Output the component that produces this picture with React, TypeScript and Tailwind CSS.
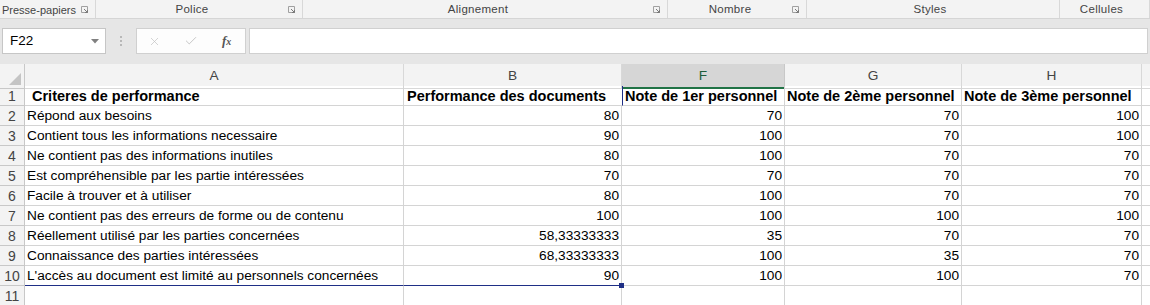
import { Check, X } from "lucide-react";

const rows: [string, string, string, string, string][] = [
  ["Répond aux besoins", "80", "70", "70", "100"],
  ["Contient tous les informations necessaire", "90", "100", "70", "100"],
  ["Ne contient pas des informations inutiles", "80", "100", "70", "70"],
  ["Est compréhensible par les partie intéressées", "70", "70", "70", "70"],
  ["Facile à trouver et à utiliser", "80", "100", "70", "70"],
  ["Ne contient pas des erreurs de forme ou de contenu", "100", "100", "100", "100"],
  ["Réellement utilisé par les parties concernées", "58,33333333", "35", "70", "70"],
  ["Connaissance des parties intéressées", "68,33333333", "100", "35", "70"],
  ["L'accès au document est limité au personnels concernées", "90", "100", "100", "70"],
];

const groups = [
  { label: "Presse-papiers", w: "w-[96px]", launcher: true, left: true },
  { label: "Police", w: "w-[207px]", launcher: true },
  { label: "Alignement", w: "w-[365px]", launcher: true },
  { label: "Nombre", w: "w-[139px]", launcher: true },
  { label: "Styles", w: "w-[253px]", launcher: false },
  { label: "Cellules", w: "flex-1", launcher: false },
];

function Launcher() {
  return (
    <svg width="8" height="8" viewBox="0 0 8 8" className="shrink-0">
      <path d="M0.5 0.5h6v6h-6z" fill="none" stroke="#a0a0a0" />
      <path d="M3 3l3.5 3.5M4 6.5h2.5V4" fill="none" stroke="#7a7a7a" />
    </svg>
  );
}

const grid = "grid grid-cols-[25px_379px_218px_163px_177px_180px_1fr]";

export default function App() {
  return (
    <div className="h-[305px] w-[1150px] overflow-hidden bg-white font-['Liberation_Sans',sans-serif] text-[13.7px] text-black">
      {/* ribbon group labels */}
      <div className="flex h-[19px] border-b border-[#d5d5d5] bg-[#f3f3f3] text-[11.5px] text-[#444]">
        {groups.map((g) => (
          <div key={g.label} className={`${g.w} flex items-center whitespace-nowrap border-r border-[#d8d8d8] pr-[6px] pt-[2px]`}>
            <span className={g.left ? "pl-[2px] text-[11px]" : "flex-1 text-center tracking-[0.3px]"}>{g.label}</span>
            {g.left && <span className="flex-1" />}
            {g.launcher && <Launcher />}
          </div>
        ))}
      </div>

      {/* formula bar */}
      <div className="flex h-[45px] items-center bg-[#e6e6e6] px-[2px] pb-px">
        <div className="flex h-[26px] w-[104px] items-center justify-between border border-[#c6c6c6] bg-white pl-[7px] pr-[6px]">
          <span className="pt-px text-[13.5px]">F22</span>
          <svg width="8" height="5" viewBox="0 0 8 5">
            <path d="M0 0h8L4 4.5z" fill="#808080" />
          </svg>
        </div>
        <div className="flex w-[30px] flex-col items-center gap-[2px]">
          <span className="h-[2px] w-[2px] bg-[#b8b8b8]" />
          <span className="h-[2px] w-[2px] bg-[#b8b8b8]" />
          <span className="h-[2px] w-[2px] bg-[#b8b8b8]" />
        </div>
        <div className="flex h-[26px] w-[110px] items-center border border-[#d0d0d0] bg-[#fdfdfd]">
          <X size={13} strokeWidth={1.3} className="ml-[11px] text-[#c2c2c2]" />
          <Check size={14} strokeWidth={1.6} className="ml-[23px] text-[#c2c2c2]" />
          <span className="ml-[24px] font-['Liberation_Serif',serif] text-[13px] font-bold italic text-[#555]">
            f<span className="text-[10px]">x</span>
          </span>
        </div>
        <div className="ml-[3px] h-[26px] flex-1 border border-[#d0d0d0] bg-white" />
      </div>

      {/* sheet */}
      <div className={`${grid} h-[22px] bg-[#f3f3f3] text-[#444]`}>
        <div className="relative border-r border-b border-[#c8c8c8] bg-[#f3f3f3]">
          <svg width="12" height="12" viewBox="0 0 12 12" className="absolute bottom-[3px] right-[3px]">
            <path d="M12 0V12H0z" fill="#c4c4c4" />
          </svg>
        </div>
        {["A", "B", "F", "G", "H"].map((c) =>
          c === "F" ? (
            <div key={c} className="flex items-center justify-center border-r border-b-2 border-r-[#c8c8c8] border-b-[#217346] bg-[#d6d6d6] pt-[2px] text-[#1d5c3a]">
              {c}
            </div>
          ) : (
            <div key={c} className="flex items-center justify-center border-r border-b border-[#d8d8d8] pt-px">
              {c}
            </div>
          ),
        )}
        <div className="border-b border-[#d8d8d8]" />
      </div>

      <div className={`${grid} auto-rows-[20px]`}>
        <div className="flex items-center justify-center border-r border-b border-[#c8c8c8] bg-[#f3f3f3] pt-[2px] text-[14px] text-[#444]">1</div>
        <div className="flex items-center whitespace-nowrap border-r border-b border-[#d4d4d4] pl-[7px] pt-[2px] text-[14.5px] font-bold">
          Criteres de performance
        </div>
        <div className="flex items-center whitespace-nowrap border-b border-[#d4d4d4] pl-[3px] pt-[2px] text-[14.5px] font-bold">
          Performance des documents
        </div>
        <div className="flex items-center whitespace-nowrap border-b border-l border-r border-b-[#d4d4d4] border-l-[#1f2f86] border-r-[#d4d4d4] pl-[2px] pt-[2px] text-[14.5px] font-bold">
          Note de 1er personnel
        </div>
        <div className="flex items-center whitespace-nowrap border-r border-b border-[#d4d4d4] pl-[2px] pt-[2px] text-[14.5px] font-bold">
          Note de 2ème personnel
        </div>
        <div className="flex items-center whitespace-nowrap border-r border-b border-[#d4d4d4] pl-[2px] pt-[2px] text-[14.5px] font-bold">
          Note de 3ème personnel
        </div>
        <div className="border-b border-[#d4d4d4]" />

        {rows.map((r, i) => {
          const last = i === rows.length - 1;
          const under = last ? "border-b-[#1f2f86]" : "border-b-[#d4d4d4]";
          return [
            <div key={`h${i}`} className="flex items-center justify-center border-r border-b border-[#c8c8c8] bg-[#f3f3f3] pt-[2px] text-[14px] text-[#444]">
              {i + 2}
            </div>,
            <div key={`a${i}`} className={`flex items-center overflow-visible whitespace-nowrap border-r border-b border-r-[#d4d4d4] ${under} pl-[2px] pt-[2px]`}>
              {r[0]}
            </div>,
            <div key={`b${i}`} className={`relative flex items-center justify-end border-r border-b border-r-[#d4d4d4] ${under} pr-[2px] pt-[2px]`}>
              {r[1]}
              {last && <span className="absolute -bottom-[3px] -right-[3px] h-[5px] w-[5px] bg-[#1f2f86]" />}
            </div>,
            <div key={`f${i}`} className="flex items-center justify-end border-r border-b border-[#d4d4d4] pr-[2px] pt-[2px]">{r[2]}</div>,
            <div key={`g${i}`} className="flex items-center justify-end border-r border-b border-[#d4d4d4] pr-[2px] pt-[2px]">{r[3]}</div>,
            <div key={`k${i}`} className="flex items-center justify-end border-r border-b border-[#d4d4d4] pr-[2px] pt-[2px]">{r[4]}</div>,
            <div key={`z${i}`} className="border-b border-[#d4d4d4]" />,
          ];
        })}

        <div className="flex items-center justify-center border-r border-b border-[#c8c8c8] bg-[#f3f3f3] pt-[2px] text-[14px] text-[#444]">11</div>
        <div className="border-r border-b border-[#d4d4d4]" />
        <div className="border-r border-b border-[#d4d4d4]" />
        <div className="border-r border-b border-[#d4d4d4]" />
        <div className="border-r border-b border-[#d4d4d4]" />
        <div className="border-r border-b border-[#d4d4d4]" />
        <div className="border-b border-[#d4d4d4]" />
      </div>
    </div>
  );
}
